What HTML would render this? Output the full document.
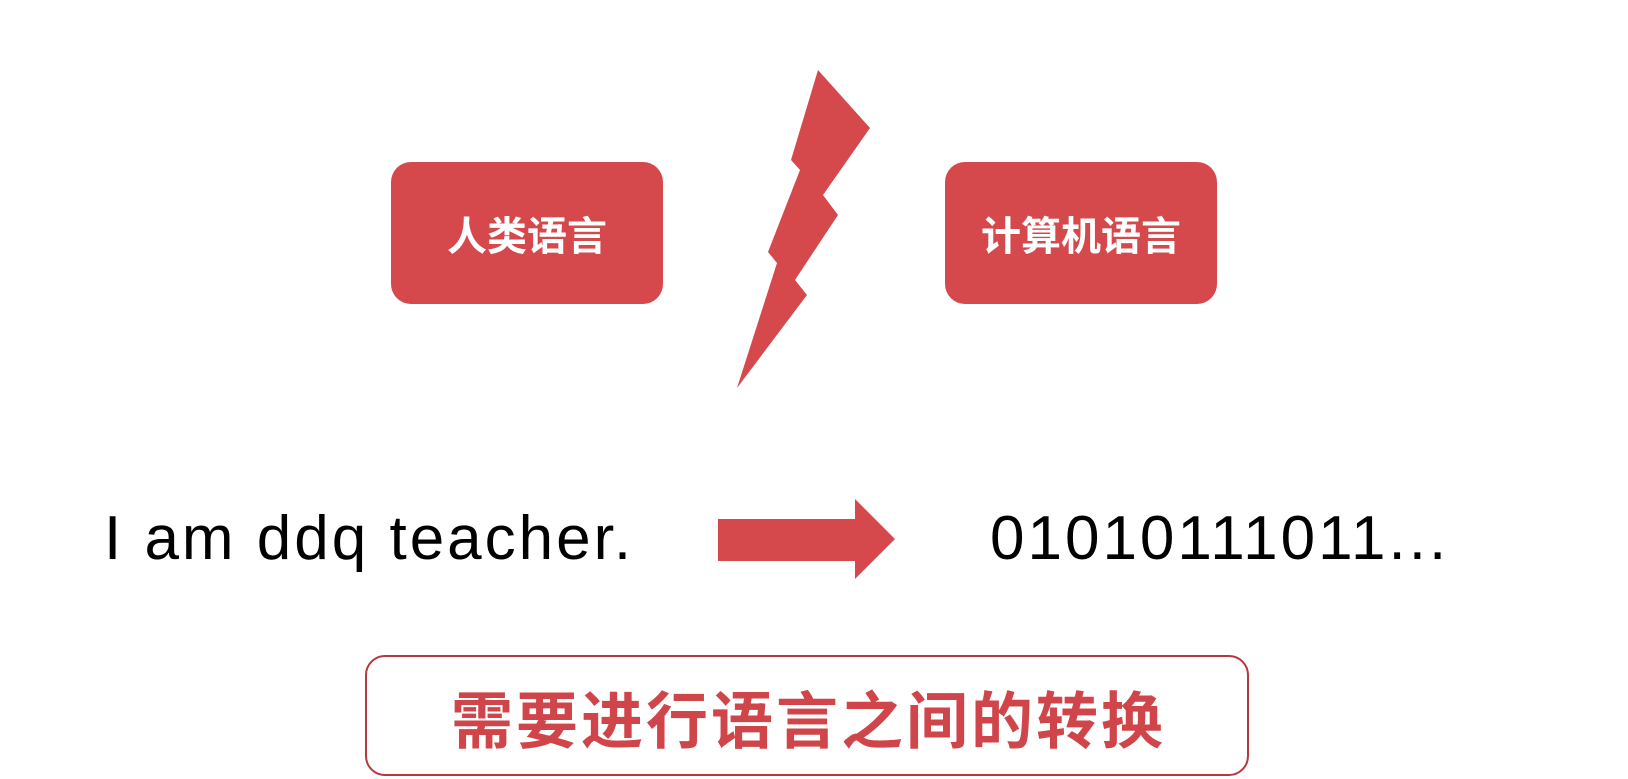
<!DOCTYPE html>
<html><head><meta charset="utf-8"><style>
body{margin:0;width:1628px;height:779px;background:#fff;position:relative;overflow:hidden;font-family:"Liberation Sans","Noto Sans CJK SC",sans-serif}
.box{position:absolute;background:#d5494d;border-radius:20px;color:#fff;font-weight:bold;font-size:40px;display:flex;align-items:center;justify-content:center}
.t{position:absolute;font-size:62px;color:#000;line-height:1;white-space:nowrap;letter-spacing:3px}
</style></head><body>
<div class="box" style="left:391px;top:162px;width:272px;height:142px">人类语言</div>
<div class="box" style="left:945px;top:162px;width:272px;height:142px">计算机语言</div>
<svg style="position:absolute;left:0;top:0" width="1628" height="779">
<polygon fill="#d5494d" points="818,70 870,128 823,195 838,215 795,280 807,295 737,388 777,263 768,252 800,170 791,160"/>
<polygon fill="#d5494d" points="718,519 855,519 855,499 895,539 855,579 855,561 718,561"/>
</svg>
<div class="t" style="left:104px;top:508px">I am ddq teacher.</div>
<div class="t" style="left:990px;top:508px">01010111011...</div>
<div style="position:absolute;left:365px;top:655px;width:884px;height:121px;border:2px solid #b8393d;border-radius:20px;box-sizing:border-box;display:flex;align-items:center;justify-content:center;color:#d0454a;font-weight:bold;font-size:62px;letter-spacing:3px;padding-left:3px">需要进行语言之间的转换</div>
</body></html>
